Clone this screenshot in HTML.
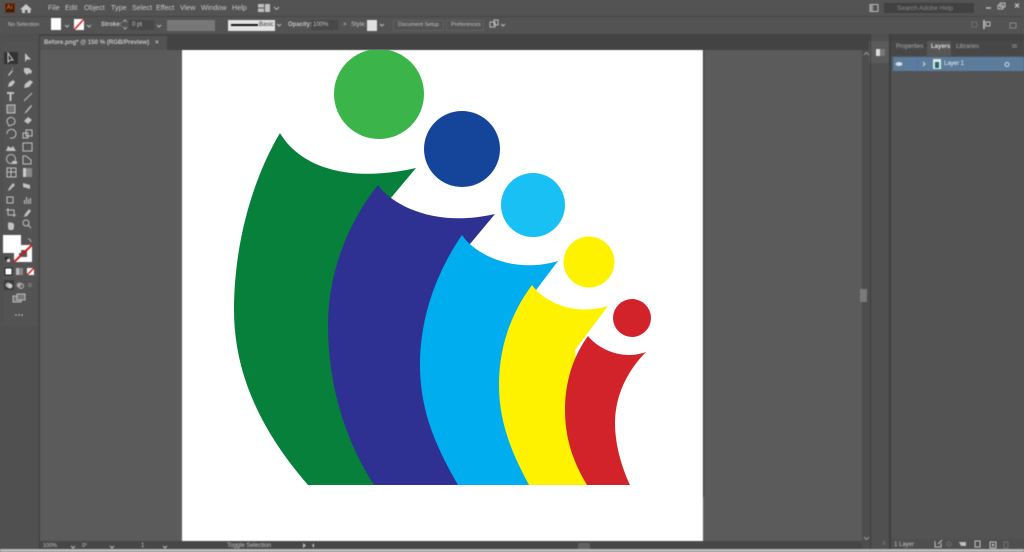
<!DOCTYPE html>
<html><head><meta charset="utf-8"><style>
html,body{margin:0;padding:0;background:#585858;}
body{width:1024px;height:552px;overflow:hidden;position:relative;font-family:"Liberation Sans",sans-serif;color:#d0d0d0;}
.a{position:absolute;}
.t{position:absolute;white-space:nowrap;font-size:6.5px;line-height:9px;color:#c4c4c4;}
.m{position:absolute;top:2px;font-size:7.2px;line-height:11px;color:#c8c8c8;white-space:nowrap;}
svg{position:absolute;left:0;top:0;}
#chrome{position:absolute;inset:0;filter:blur(.5px);}
</style></head><body>
<div id="chrome">
<div class="a" style="left:0;top:0;width:1024px;height:17px;background:#535353"></div>
<div class="a" style="left:0;top:16px;width:1024px;height:1px;background:#474747"></div>
<div class="a" style="left:0;top:17px;width:1024px;height:17px;background:#535353"></div>
<div class="a" style="left:0;top:34px;width:1024px;height:16px;background:#434343"></div>
<div class="a" style="left:0;top:34px;width:39px;height:518px;background:#505050"></div>
<div class="a" style="left:39px;top:34px;width:1px;height:518px;background:#3e3e3e"></div>
<div class="a" style="left:3px;top:41px;width:34px;height:285px;background:#535353"></div>
<div class="a" style="left:40px;top:36px;width:127px;height:14px;background:#535353"></div>
<div class="a" style="left:40px;top:50px;width:822px;height:491px;background:#5b5b5b"></div>
<div class="a" style="left:182px;top:50px;width:521px;height:491px;background:#fff"></div>
<div class="a" style="left:703px;top:50px;width:1px;height:447px;background:#333"></div>
<div class="a" style="left:40px;top:541px;width:822px;height:8px;background:#474747"></div>
<div class="a" style="left:0;top:549px;width:1024px;height:3px;background:#bdbdbd"></div>
<div class="a" style="left:862px;top:50px;width:9px;height:499px;background:#4d4d4d"></div>
<div class="a" style="left:860px;top:289px;width:7px;height:13px;background:#7a7a7a"></div>
<div class="a" style="left:871px;top:34px;width:19px;height:515px;background:#505050"></div>
<div class="a" style="left:869px;top:41px;width:20px;height:22px;background:#5a5a5a"></div>
<div class="a" style="left:870px;top:34px;width:1px;height:515px;background:#3e3e3e"></div>
<div class="a" style="left:889px;top:34px;width:2px;height:515px;background:#3e3e3e"></div>
<div class="a" style="left:891px;top:34px;width:133px;height:515px;background:#535353"></div>
<div class="a" style="left:891px;top:34px;width:133px;height:7px;background:#434343"></div>
<div class="a" style="left:891px;top:41px;width:133px;height:15px;background:#474747"></div>
<div class="a" style="left:927px;top:41px;width:24px;height:15px;background:#575757"></div>
<div class="a" style="left:893px;top:57px;width:131px;height:14px;background:#5c7c9c"></div>
<div class="a" style="left:917px;top:59px;width:1px;height:11px;background:#4472c4"></div>
<div class="a" style="left:933px;top:59px;width:8px;height:10px;background:#dfe6e6"></div>
<div class="a" style="left:935px;top:62px;width:4px;height:6px;background:#1c6a6a"></div>
<div class="a" style="left:891px;top:539px;width:133px;height:10px;background:#4f4f4f"></div>

<!-- App icon -->
<div class="a" style="left:5px;top:3px;width:10px;height:10px;background:#3a1c0c;border:1px solid #6d3010;box-sizing:border-box"></div>
<div class="t" style="left:6.500px;top:3.500px;font-size:6px;font-weight:bold;color:#e8641a">Ai</div>
<svg width="1024" height="552">
<path d="M26 4L32 9.500H30.500V13H27.500V10H25V13H22V9.500H20Z" fill="#c8c8c8"/>
<rect x="258" y="4" width="6" height="3.500" fill="#c0c0c0"/><rect x="265" y="4" width="5" height="8" fill="#c0c0c0"/><rect x="258" y="8.500" width="6" height="3.500" fill="#c0c0c0"/>
<g fill="none" stroke="#bbb" stroke-width="1"><path d="M274 7l2.500 2.500L279 7M65 25l2 2 2-2M87 25l2 2 2-2M157 25l2 2 2-2M380 24l2 2 2-2M277 24l2 2 2-2M501 24l2 2 2-2"/></g>
<g fill="none" stroke="#bbb" stroke-width=".8"><path d="M123 22l2-2 2 2M123 27l2 2 2-2"/></g>
<!-- right header icons -->
<rect x="870" y="4.500" width="8" height="7" fill="none" stroke="#bbb"/><rect x="870" y="4.500" width="3" height="7" fill="#999"/>
<path d="M986 8h5" stroke="#bbb" stroke-width="1.500"/>
<rect x="998" y="5" width="5" height="4" fill="none" stroke="#bbb"/><rect x="1000" y="3" width="5" height="4" fill="none" stroke="#bbb"/>
<path d="M1015 3.500l4 4m0-4l-4 4" stroke="#ccc" stroke-width="1.200"/>
<circle cx="888" cy="6.500" r="1.800" fill="none" stroke="#bbb"/><path d="M889 8l2 2" stroke="#bbb"/>
<!-- control icons right -->
<rect x="972" y="22" width="5" height="5" fill="none" stroke="#888" stroke-dasharray="1 1"/>
<path d="M984 20v9" stroke="#ccc" stroke-width="1.500"/><rect x="986" y="22" width="4" height="4" fill="none" stroke="#bbb"/>
<rect x="1010" y="23" width="6" height="5" fill="none" stroke="#888"/>
<rect x="490" y="22" width="5" height="5" fill="none" stroke="#bbb"/><rect x="494" y="20" width="4" height="5" fill="none" stroke="#bbb"/>
<!-- Tools -->
<g fill="#c2c2c2" stroke="none">
<rect x="4" y="52" width="14" height="12" fill="#333"/>
<path d="M8 53l0 9 2-2 3 0z" fill="none" stroke="#c8c8c8"/>
<path d="M25 53v9l2-2.500h4z"/>
<path d="M8 75l4-5 1 1-4 5zM12 68h1v1h-1z"/>
<path d="M24 68h5l3 3-1 3-2-1-2 2-3-3z"/>
<path d="M8 87l1-4 4-3 2 2-3 4z"/>
<path d="M24 88l1-4 5-4 3 2-4 5z"/>
<path d="M7 92h7v2h-2.500v7h-2v-7H7z"/>
<path d="M24 101l8-8" stroke="#c2c2c2" fill="none"/>
<rect x="7" y="105" width="8" height="8" fill="#777" stroke="#c2c2c2"/>
<path d="M24 114l2-3 5-6 1 1-5 6z"/>
<path d="M7 122a4 4 0 1 1 7 2l-5 2z" fill="none" stroke="#c2c2c2"/>
<path d="M24 121l4-4 4 3-4 4z"/>
<path d="M7 134a4.500 4.500 0 1 1 3 4" fill="none" stroke="#c2c2c2"/>
<rect x="23" y="133" width="5" height="5" fill="none" stroke="#c2c2c2"/><rect x="26" y="130" width="6" height="6" fill="none" stroke="#c2c2c2"/>
<path d="M6 151l2-5 3 2 2-2 3 5z"/>
<rect x="23" y="143" width="9" height="8" fill="none" stroke="#c2c2c2"/><path d="M25 145l5 4"/>
<circle cx="11" cy="159" r="4.500" fill="none" stroke="#c2c2c2"/><path d="M12 161h5v3h-5z"/>
<path d="M23 156h3l5 4v4h-8z" fill="none" stroke="#c2c2c2"/>
<rect x="7" y="168" width="9" height="9" fill="none" stroke="#c2c2c2"/><path d="M7 172h9M11 168v9" stroke="#c2c2c2"/>
<rect x="23" y="168" width="9" height="9" fill="#888"/><rect x="23" y="168" width="3" height="9" fill="#ccc"/>
<path d="M8 191l1-3 4-5 2 2-5 5z"/>
<path d="M23 183l7 2v4l-7-2z"/>
<rect x="7" y="197" width="6" height="6" fill="none" stroke="#c2c2c2"/>
<path d="M24 204v-4h1v4zM26 204v-7h1v7zM28 204v-5h1v5zM30 204v-6h1v6z"/>
<path d="M8 208v7h8M6 210h8v7" fill="none" stroke="#c2c2c2"/>
<path d="M24 217l1-3 4-5 2 2-4 5z"/>
<path d="M8 228v-5l1-1 1 1 1-1 1 1 1 0 1 1v4l-1 2H9z"/>
<circle cx="26" cy="223" r="3" fill="none" stroke="#c2c2c2"/><path d="M28 225l3 3" stroke="#c2c2c2" fill="none"/>
</g>
<!-- Fill / stroke -->
<rect x="14" y="245" width="18" height="17" fill="#fff"/>
<rect x="19" y="250" width="8" height="7" fill="#555"/>
<path d="M14 262L32 245" stroke="#d21a1a" stroke-width="2"/>
<rect x="3" y="235" width="18" height="18" fill="#fff"/>
<path d="M28 239a3 3 0 0 1 3 3" stroke="#bbb" fill="none"/>
<rect x="5" y="257" width="3" height="3" fill="#222"/><rect x="7" y="259" width="3" height="3" fill="#ddd"/>
<rect x="5" y="268" width="7" height="7" fill="#fff" stroke="#222"/>
<rect x="16" y="268" width="7" height="7" fill="#888"/><rect x="16" y="268" width="3" height="7" fill="#bbb"/>
<rect x="27" y="268" width="7" height="7" fill="#fff"/><path d="M27 275l7-7" stroke="#d21a1a" stroke-width="1.500"/>
<rect x="4" y="280" width="10" height="10" fill="#3a3a3a"/>
<circle cx="8" cy="285" r="2.500" fill="#aaa"/><circle cx="10" cy="286" r="2.500" fill="#ccc"/>
<circle cx="19" cy="285" r="2.500" fill="#999"/><circle cx="21" cy="286" r="2.500" fill="none" stroke="#bbb"/>
<circle cx="30" cy="285" r="2.500" fill="#6a6a6a"/>
<rect x="13" y="296" width="8" height="6" fill="#777" stroke="#bbb"/><rect x="17" y="294" width="8" height="6" fill="#777" stroke="#bbb"/>
<circle cx="16" cy="315" r=".8" fill="#ccc"/><circle cx="19" cy="315" r=".8" fill="#ccc"/><circle cx="22" cy="315" r=".8" fill="#ccc"/>
<!-- Scroll arrows -->
<path d="M864 55l2.500-2.500L869 55M864 537l2.500 2.500L869 537" fill="none" stroke="#999"/>
<rect x="876" y="49" width="9" height="7" fill="#ddd"/><rect x="880" y="49" width="5" height="7" fill="#777"/>
<!-- Layers icons -->
<ellipse cx="899" cy="64" rx="3.500" ry="2" fill="#d4dce4"/>
<path d="M923 62l2 2-2 2" fill="none" stroke="#ddd"/>
<circle cx="1007" cy="64.500" r="2" fill="none" stroke="#cdd"/>
<g fill="none" stroke="#c0c0c0"><path d="M935 541v6h6v-4M938 544l4-4"/><rect x="975" y="541" width="5" height="6"/><rect x="990" y="542" width="6" height="6"/><path d="M993 543.500v3M991.500 545h3"/></g>
<path d="M959 542h7v4h-5z" fill="#c0c0c0"/>
<g fill="none" stroke="#707070"><circle cx="949" cy="544" r="2"/><rect x="1004" y="542" width="4" height="6"/></g>
<path d="M303 543v5l3-2.500zM314 543l-2 2.500 2 2.500" fill="#c0c0c0"/>
<path d="M71 546l2 2 2-2M110 546l2 2 2-2M163 546l2 2 2-2" fill="none" stroke="#bbb"/>
<path d="M883 541l1.500 2-1.500 2" fill="none" stroke="#777"/>
<path d="M1012 45h5M1012 47h5" stroke="#888"/>
</svg>
<!-- boxes -->
<div class="a" style="left:51px;top:18px;width:10px;height:12px;background:#fff"></div>
<div class="a" style="left:74px;top:19px;width:10px;height:11px;background:#fff;overflow:hidden"><svg width="10" height="11"><path d="M0 11L10 0" stroke="#d21a1a" stroke-width="1.500"/></svg></div>
<div class="a" style="left:129px;top:20px;width:25px;height:10px;background:#484848"></div>
<div class="a" style="left:167px;top:20px;width:48px;height:11px;background:#787878"></div>
<div class="a" style="left:228px;top:20px;width:47px;height:11px;background:#e4e4e4"></div>
<div class="a" style="left:231px;top:24px;width:27px;height:2px;background:#111"></div>
<div class="t" style="left:259px;top:21px;color:#333;font-size:6px">Basic</div>
<div class="a" style="left:311px;top:20px;width:27px;height:10px;background:#484848"></div>
<div class="a" style="left:367px;top:20px;width:10px;height:11px;background:#e0e0e0"></div>
<div class="a" style="left:393px;top:20px;width:51px;height:11px;border:1px solid #606060;box-sizing:border-box"></div>
<div class="a" style="left:446px;top:20px;width:38px;height:11px;border:1px solid #606060;box-sizing:border-box"></div>
<div class="a" style="left:884px;top:3px;width:90px;height:10px;background:#414141"></div>
<!-- menu -->
<div class="m" style="left:48px">File</div><div class="m" style="left:65px">Edit</div><div class="m" style="left:84px">Object</div><div class="m" style="left:111px">Type</div><div class="m" style="left:132px">Select</div><div class="m" style="left:156px">Effect</div><div class="m" style="left:180px">View</div><div class="m" style="left:201px">Window</div><div class="m" style="left:232px">Help</div>
<div class="t" style="left:8px;top:21px;font-size:5.500px">No Selection</div>
<div class="t" style="left:101px;top:21px;font-weight:bold;font-size:6px">Stroke:</div>
<div class="t" style="left:132px;top:21px;font-size:6px">0 pt</div>
<div class="t" style="left:288px;top:21px;font-weight:bold;font-size:6px">Opacity:</div>
<div class="t" style="left:313px;top:21px;font-size:6px">100%</div>
<div class="t" style="left:343px;top:21px;font-size:6px">&gt;</div>
<div class="t" style="left:351px;top:21px;font-size:6px">Style:</div>
<div class="t" style="left:398px;top:21px;font-size:5.500px">Document Setup</div>
<div class="t" style="left:451px;top:21px;font-size:5.500px">Preferences</div>
<div class="t" style="left:897px;top:3.500px;font-size:6.500px;color:#8a8a8a">Search Adobe Help</div>
<div class="t" style="left:44px;top:38px;font-size:6.100px;font-weight:bold">Before.png* @ 150 % (RGB/Preview)</div>
<div class="t" style="left:155px;top:38px;font-size:6.500px;font-weight:bold">×</div>
<div class="t" style="left:896px;top:43px;font-size:6px;color:#aaa">Properties</div>
<div class="t" style="left:931px;top:43px;font-size:6px;font-weight:bold;color:#ddd">Layers</div>
<div class="t" style="left:956px;top:43px;font-size:6px;color:#aaa">Libraries</div>
<div class="t" style="left:944px;top:60px;font-size:6px;color:#eee">Layer 1</div>
<div class="t" style="left:894px;top:541px;font-size:6px">1 Layer</div>
<div class="t" style="left:43px;top:542px;font-size:5.500px">100%</div>
<div class="t" style="left:82px;top:542px;font-size:5.500px">0°</div>
<div class="t" style="left:141px;top:542px;font-size:6px">1</div>
<div class="t" style="left:227px;top:542px;font-size:6px">Toggle Selection</div>
<div class="a" style="left:578px;top:543px;width:12px;height:6px;background:#626262"></div>
</div>
<!-- Artwork -->
<svg width="1024" height="552" style="filter:blur(.3px)">
<clipPath id="c"><rect x="182" y="50" width="521" height="491"/></clipPath>
<path d="M280 133C297 162 340 185 416 168L385 205L374 485H308C262 432 234 375 234 310C234 245 252 180 280 133Z" fill="#06803b"/>
<path d="M378 185C392 205 435 228 495 214L465 250L458 485H374C345 440 328 385 328 325C328 270 350 220 378 185Z" fill="#2e3192"/>
<path d="M462 235C475 255 515 274 558 261L530 298L529 485H458C435 445 420 410 420 365C420 315 438 270 462 235Z" fill="#00aeef"/>
<path d="M532 285C545 303 575 316 608 306L575 350L587 485H529C510 450 499 420 499 385C499 345 512 312 532 285Z" fill="#fff200"/>
<path d="M588 336C600 351 625 360 646 352C628 370 615 395 615 423C615 445 622 468 630 485H587C573 462 565 438 565 410C565 380 574 355 588 336Z" fill="#d2232a"/>
<circle cx="379" cy="94" r="45" fill="#3bb54a" clip-path="url(#c)"/>
<circle cx="462" cy="149" r="38" fill="#15449b"/>
<circle cx="533" cy="205" r="32" fill="#19c0f4"/>
<circle cx="589" cy="262" r="25.500" fill="#fff200"/>
<circle cx="632" cy="318" r="19" fill="#d2232a"/>
</svg>
</body></html>
